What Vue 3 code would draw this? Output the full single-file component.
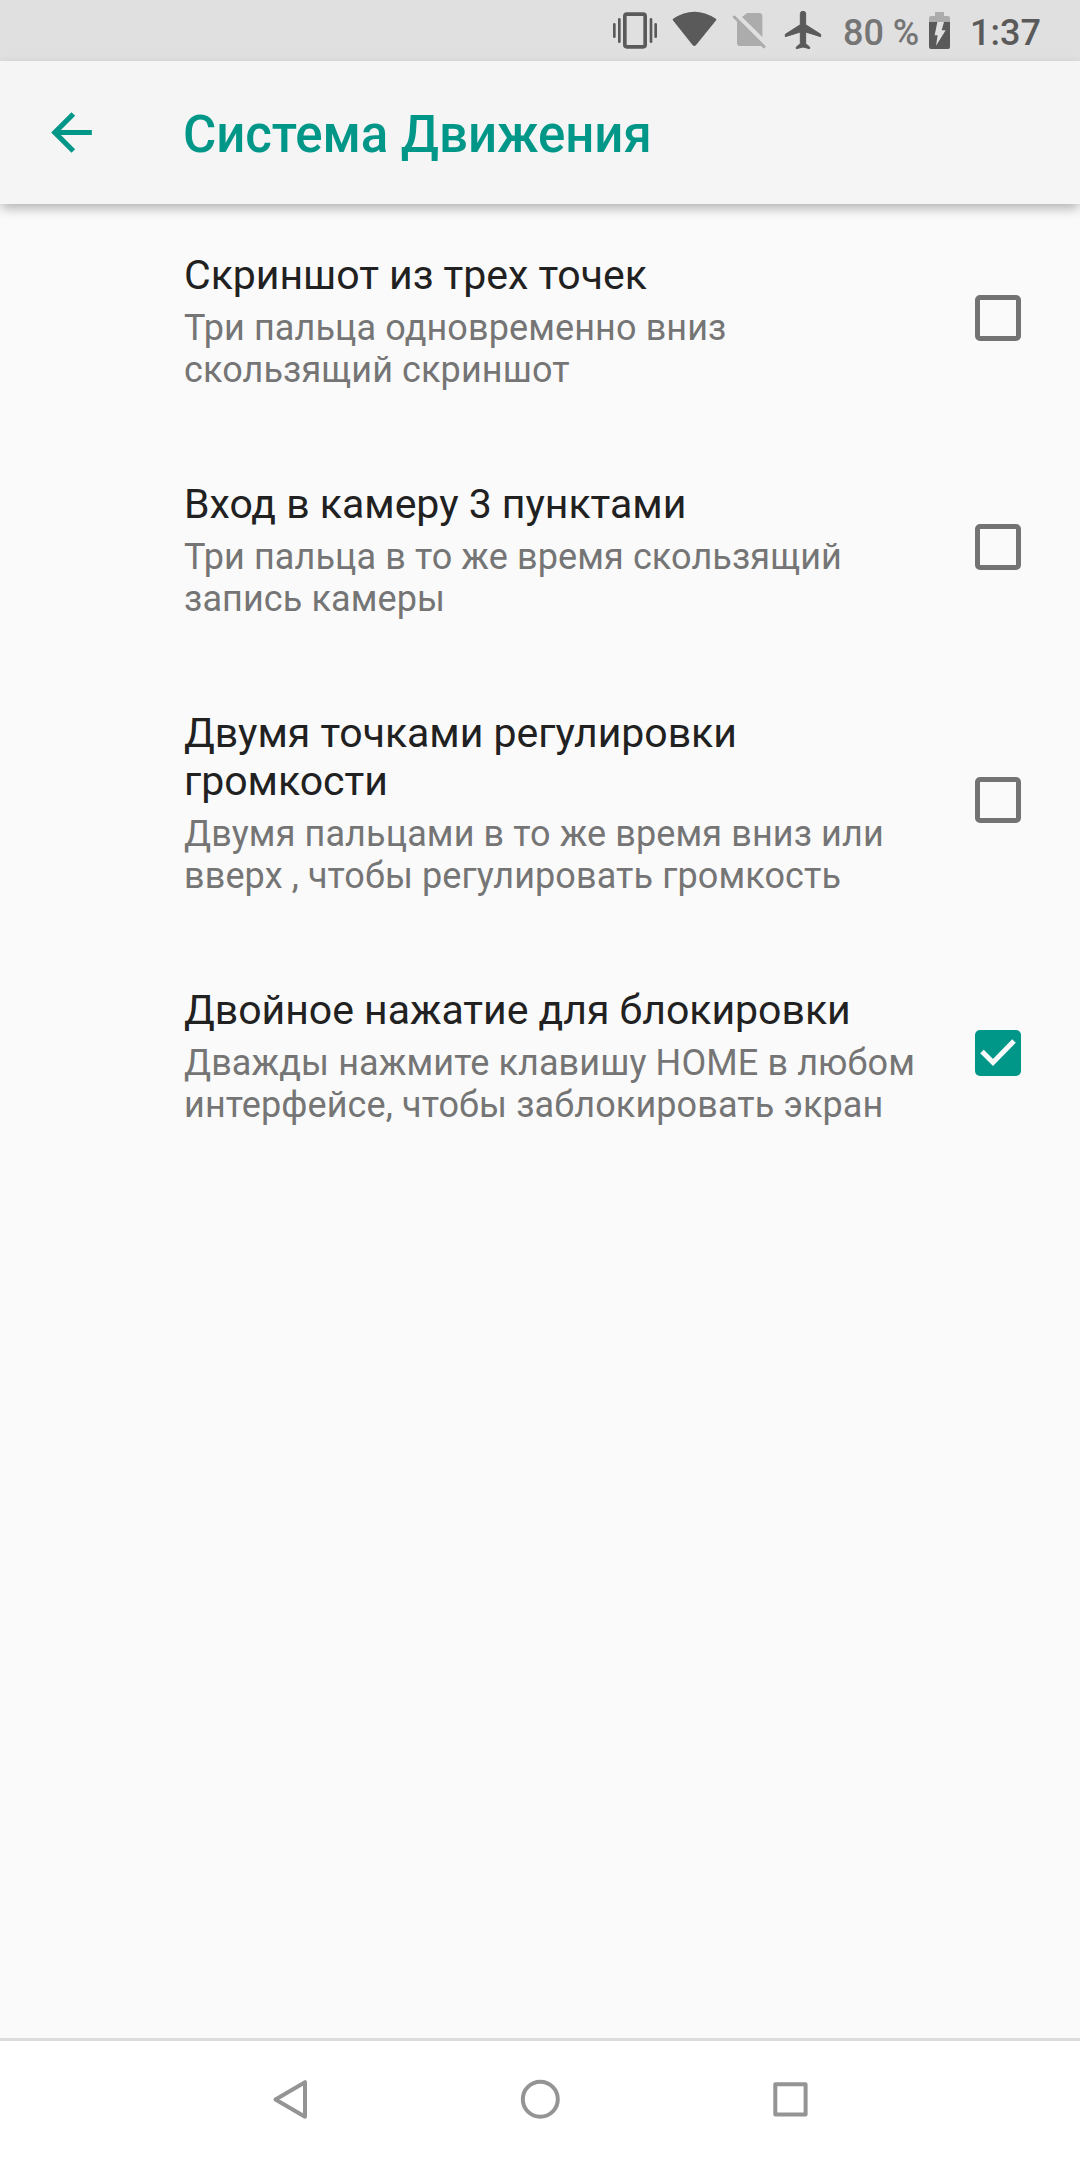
<script setup>
const items = [
  { title: ['Скриншот из трех точек'], sub: ['Три пальца одновременно вниз', 'скользящий скриншот'], on: false },
  { title: ['Вход в камеру 3 пунктами'], sub: ['Три пальца в то же время скользящий', 'запись камеры'], on: false },
  { title: ['Двумя точками регулировки', 'громкости'], sub: ['Двумя пальцами в то же время вниз или', 'вверх , чтобы регулировать громкость'], on: false },
  { title: ['Двойное нажатие для блокировки'], sub: ['Дважды нажмите клавишу HOME в любом', 'интерфейсе, чтобы заблокировать экран'], on: true },
]
</script>

<template>
  <div class="screen">
    <div class="status">
      <svg width="235" height="61" viewBox="0 0 705 183">
        <g fill="none" stroke="#5a5a5a">
          <rect x="74.500" y="42.500" width="61" height="98" rx="6" stroke-width="11" />
          <path stroke-width="8" stroke-linecap="round" d="M43 73v37M58 58v67M153 58v67M167 73v37" />
        </g>
        <path fill="#5a5a5a" stroke="#5a5a5a" stroke-width="6" stroke-linejoin="round" d="M221 59Q283 18 346 59L286 133q-3 3-6 0z" />
        <path fill="#acacac" d="M441 39h36q10 0 10 10v62L426 51zM411 62l75 75q-2 1-5 1h-60q-10 0-10-10z" />
        <path d="M403 51l89 89" stroke="#acacac" stroke-width="9" stroke-linecap="round" />
        <path fill="#5a5a5a" stroke="#5a5a5a" stroke-width="3" stroke-linejoin="round" d="M601 41q0-7 8-7t8 7v33l45 29v7l-45-14v35l12 10v5l-20-5-20 5v-5l12-10V96l-45 14v-7l45-29z" />
      </svg>
      <span class="percent">80 %</span>
      <svg class="battery" width="22" height="61" viewBox="0 0 66 183">
        <path fill="#acacac" d="M18 36h27v12h12q6 0 6 6v13H0V54q0-6 6-6h12z" />
        <path fill="#5a5a5a" d="M0 66h63v75q0 6-6 6H6q-6 0-6-6z" />
        <path fill="#e0e0e0" d="M25 66h20L38 91h12L21 137l5-31H17z" />
      </svg>
      <span class="clock">1:37</span>
    </div>
    <header>
      <svg class="back" width="61" height="61" viewBox="0 0 24 24"><path fill="#009688" d="M20 11H7.830l5.590-5.590L12 4l-8 8 8 8 1.410-1.410L7.830 13H20z" /></svg>
      <h1>Система Движения</h1>
    </header>
    <main>
      <section v-for="item in items" :key="item.title[0]" class="row">
        <div class="copy">
          <div class="title"><div v-for="line in item.title" :key="line">{{ line }}</div></div>
          <div class="sub"><div v-for="line in item.sub" :key="line">{{ line }}</div></div>
        </div>
        <svg class="check" width="46" height="46" viewBox="0 0 46 46">
          <template v-if="item.on">
            <rect width="46" height="46" rx="5" fill="#009688" />
            <path d="M7 21.500l11 11L39 11" fill="none" stroke="#fafafa" stroke-width="5" />
          </template>
          <rect v-else x="2.500" y="2.500" width="41" height="41" rx="2.500" fill="none" stroke="#737373" stroke-width="5" />
        </svg>
      </section>
    </main>
    <nav>
      <svg width="750" height="119" viewBox="0 0 750 119" fill="none" stroke="#949494" stroke-width="4" stroke-linejoin="round">
        <path d="M140 41.200v34.600l-29.500-17.300z" /><circle cx="375.300" cy="58.300" r="17.500" /><rect x="610.300" y="43.300" width="30.300" height="30.300" />
      </svg>
    </nav>
  </div>
</template>

<style>
body { margin: 0; }
</style>
<style scoped>
.screen { width: 1080px; height: 2160px; display: flex; flex-direction: column; background: #fafafa; font-family: Roboto, sans-serif; overflow: hidden; }
.status { height: 61px; flex: none; display: flex; align-items: center; background: #e0e0e0; color: #5a5a5a; padding-left: 600px; font-size: 36px; font-weight: 500; line-height: 42px; }
.percent { margin-left: 8px; padding-top: 4px; width: 86px; white-space: nowrap; color: #757575; }
.clock { padding-top: 4px; margin-left: 19px; }
header { height: 143px; flex: none; display: flex; align-items: center; background: #f5f5f5; box-shadow: 0 5px 11px -1px rgba(0,0,0,.3); }
.back { margin-left: 41px; }
h1 { margin: 4px 0 0 81px; font-size: 51px; line-height: 60px; letter-spacing: -.06px; font-weight: 500; color: #009688; }
main { flex: 1; }
.row { display: flex; align-items: center; padding: 47px 59px 42px 184px; }
.copy { flex: 1; white-space: nowrap; }
.check { margin-bottom: 6px; }
.title { font-size: 41px; line-height: 48px; letter-spacing: -.02px; color: #212121; }
.sub { font-size: 36px; line-height: 42px; letter-spacing: .11px; color: #757575; margin-top: 8px; }
nav { height: 119px; border-top: 3px solid #dcdcdc; flex: none; background: #fff; display: flex; justify-content: center; }
svg { display: block; flex: none; }
</style>
